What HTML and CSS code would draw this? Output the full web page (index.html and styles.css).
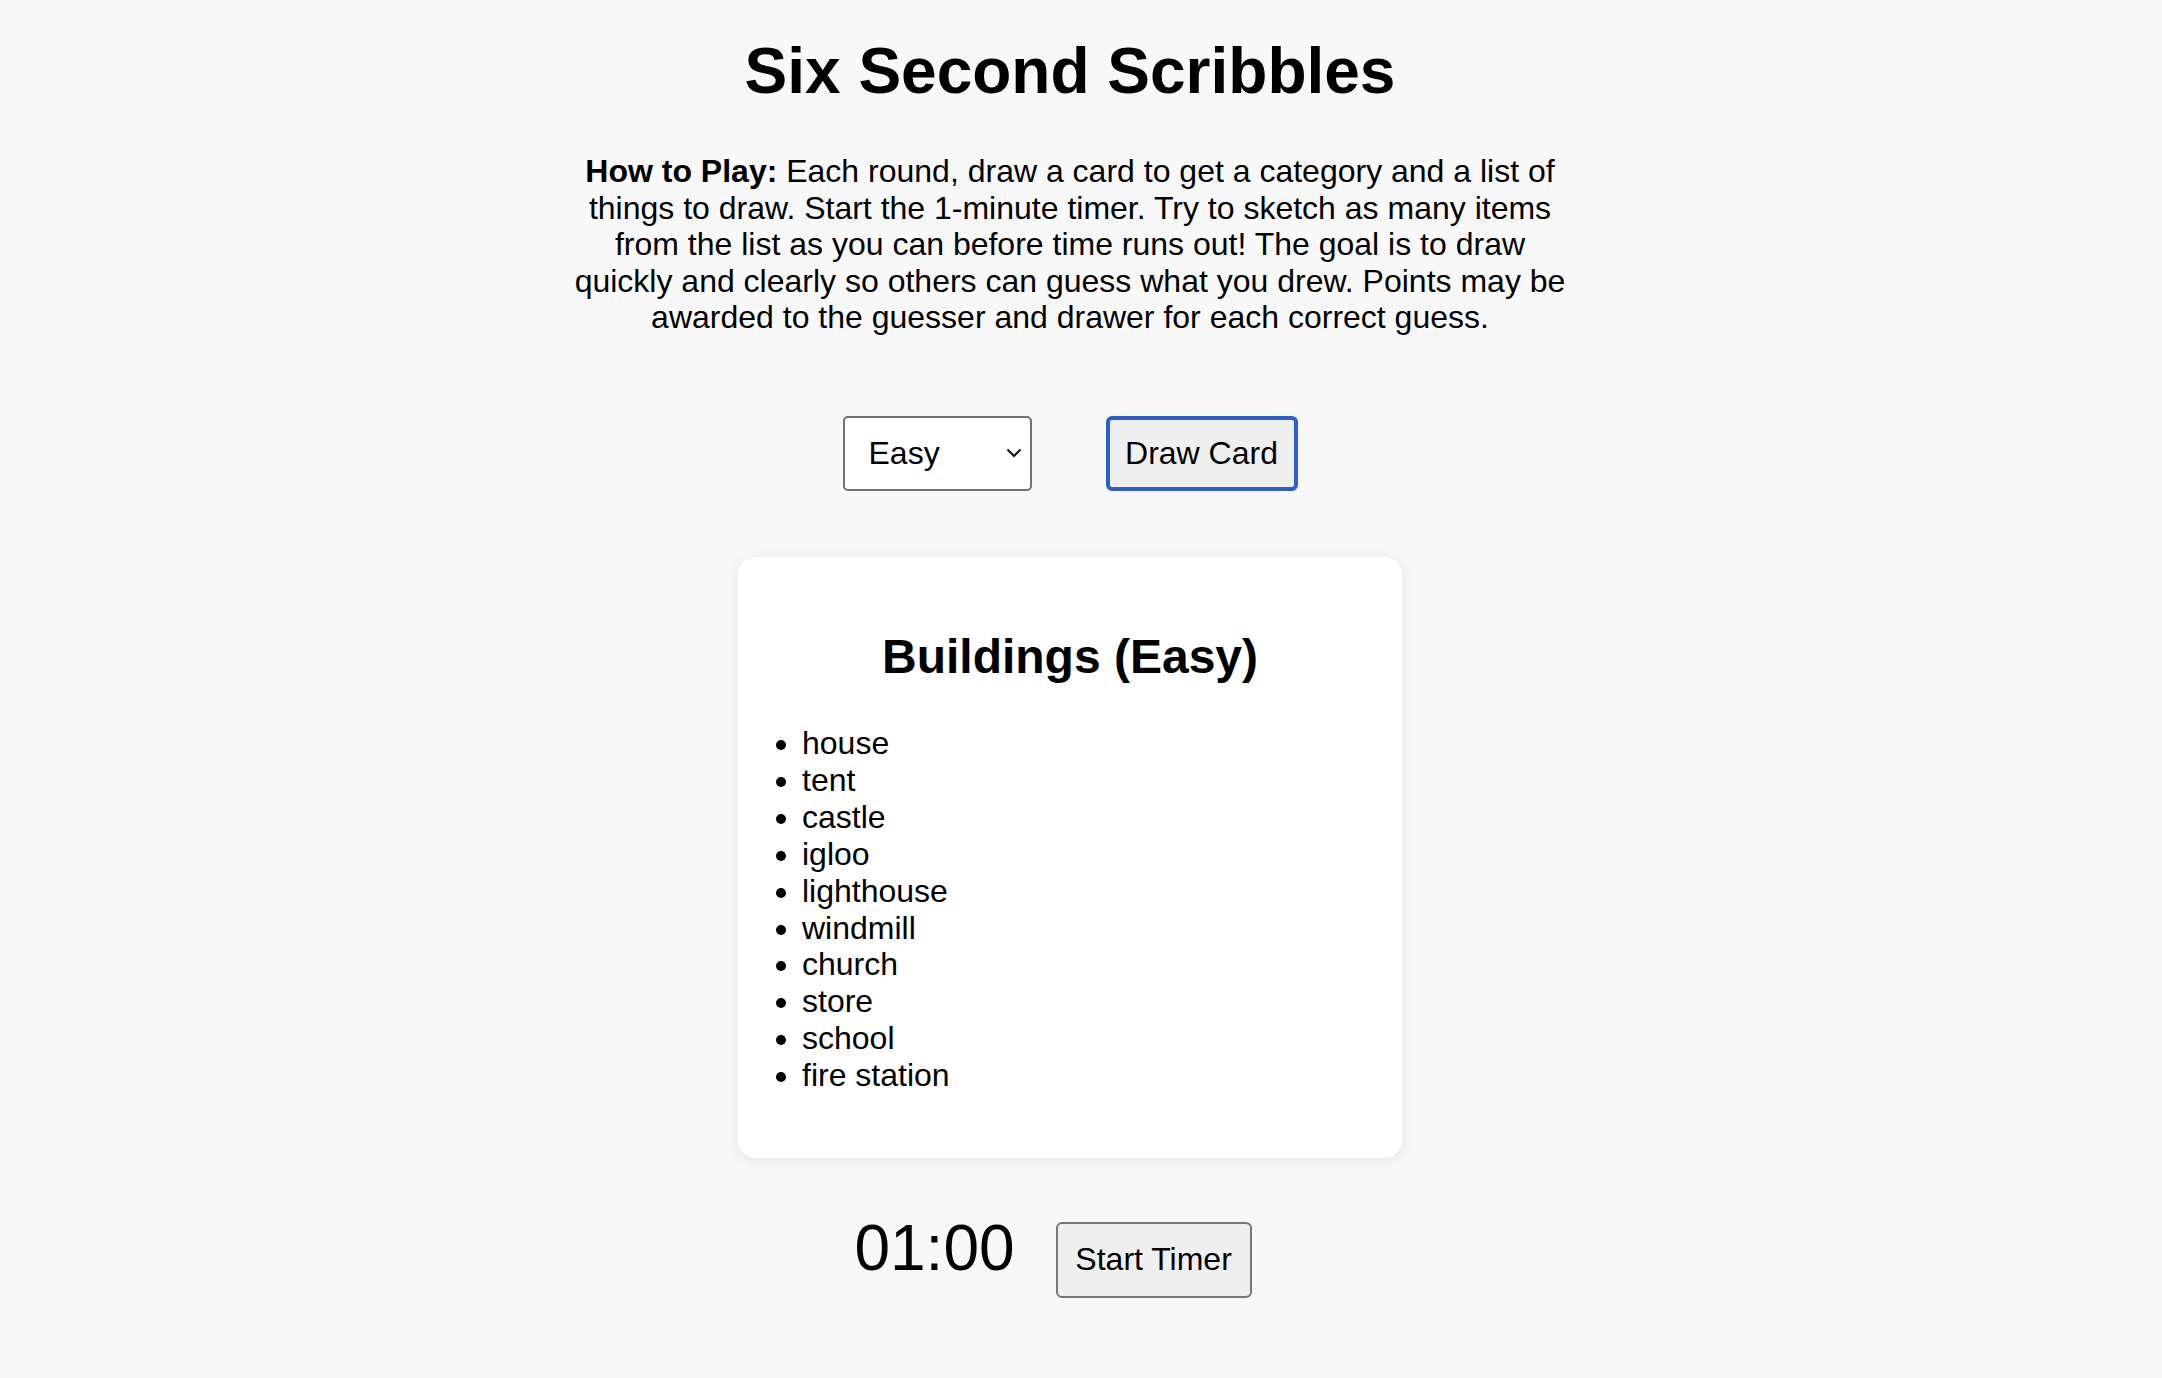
FILE: index.html
```html
<!DOCTYPE html>
<html lang="en">
<head>
<meta charset="utf-8">
<title>Six Second Scribbles</title>
<link rel="stylesheet" href="styles.css">
</head>
<body>
<main class="page">
  <h1 class="title">Six Second Scribbles</h1>
  <p class="intro"><strong>How to Play:</strong> Each round, draw a card to get a category and a list of things to draw. Start the 1-minute timer. Try to sketch as many items from the list as you can before time runs out! The goal is to draw quickly and clearly so others can guess what you drew. Points may be awarded to the guesser and drawer for each correct guess.</p>

  <div class="controls">
    <div class="select-box">
      <span class="select-value">Easy</span>
      <svg class="chevron" width="16" height="10" viewBox="0 0 16 10"><path d="M1.5 1.5 L8 8 L14.5 1.5" fill="none" stroke="#111" stroke-width="2"/></svg>
    </div>
    <button class="btn btn-focused" type="button">Draw Card</button>
  </div>

  <section class="card">
    <h2 class="card-title">Buildings (Easy)</h2>
    <ul class="items">
      <li>house</li>
      <li>tent</li>
      <li>castle</li>
      <li>igloo</li>
      <li>lighthouse</li>
      <li>windmill</li>
      <li>church</li>
      <li>store</li>
      <li>school</li>
      <li>fire station</li>
    </ul>
  </section>

  <div class="timer-row">
    <span class="timer">01:00</span>
    <button class="btn btn-timer" type="button">Start Timer</button>
  </div>
</main>
</body>
</html>
```

FILE: styles.css
```css
html, body {
  margin: 0;
  padding: 0;
}

body {
  background: #f8f8f8;
  color: #000;
  font-family: "Liberation Sans", Arial, Helvetica, sans-serif;
  font-size: 32px;
}

.page {
  width: 2140px;
  display: flex;
  flex-direction: column;
  align-items: center;
  padding-bottom: 40px;
}

.title {
  font-size: 64px;
  font-weight: bold;
  margin: 34px 0 45px;
  text-align: center;
  line-height: normal;
}

.intro {
  max-width: 1000px;
  margin: 0;
  text-align: center;
  line-height: 36.6px;
}

.controls {
  margin-top: 80px;
  display: flex;
  align-items: center;
  justify-content: center;
  gap: 74px;
}

.select-box {
  box-sizing: border-box;
  width: 189px;
  height: 75px;
  border: 2px solid #717171;
  border-radius: 5px;
  background: #fff;
  display: flex;
  align-items: center;
  justify-content: space-between;
  padding: 0 8px 0 24px;
}

.select-value {
  font-size: 32px;
}

.chevron {
  display: block;
}

.btn {
  box-sizing: border-box;
  height: 75px;
  padding: 0 17px;
  border: 2px solid #767676;
  border-radius: 6px;
  background: #efefef;
  color: #000;
  font-family: "Liberation Sans", Arial, Helvetica, sans-serif;
  font-size: 32px;
}

.btn-focused {
  border: 4px solid #2a5fcd;
  padding: 0 15px;
  width: 192px;
}

.btn-timer {
  width: 196px;
  height: 76px;
}

.card {
  box-sizing: border-box;
  width: 664px;
  margin-top: 66px;
  background: #fff;
  border-radius: 18px;
  box-shadow: 0 2px 14px rgba(0, 0, 0, 0.08);
  padding: 30px 30px 32px;
}

.card-title {
  font-size: 48px;
  font-weight: bold;
  text-align: center;
  margin: 42px 0 41px;
  line-height: normal;
}

.items {
  margin: 0 0 32px;
  padding-left: 34px;
  line-height: 36.9px;
}

.timer-row {
  margin-top: 53px;
  display: flex;
  align-items: baseline;
  justify-content: center;
  gap: 41px;
  padding-right: 34px;
}

.timer {
  font-size: 64px;
  line-height: normal;
}
```
